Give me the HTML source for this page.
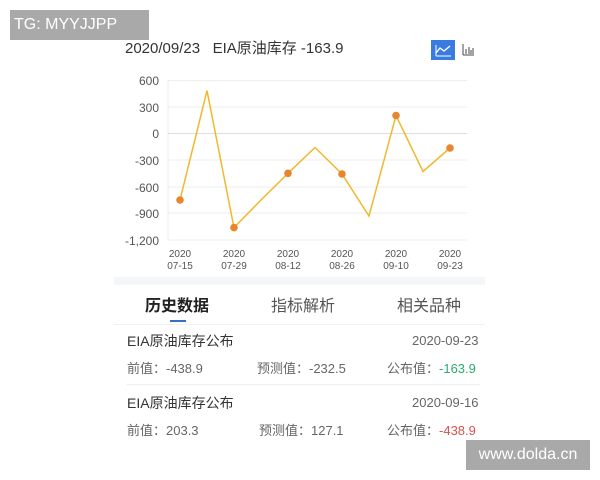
<!DOCTYPE html>
<html><head><meta charset="utf-8"><style>
body{margin:0;width:600px;height:480px;background:#fff;position:relative;overflow:hidden;font-family:"Liberation Sans","Noto Sans CJK SC",sans-serif;}
.a{position:absolute;white-space:nowrap}
</style></head><body>
<div class="a" style="left:10px;top:10px;width:139px;height:30px;background:#a9a9a9;color:#fff;font-size:16px;line-height:30px;padding-left:4px;box-sizing:border-box">TG: MYYJJPP</div>
<div class="a" style="left:125px;top:39px;font-size:15px;color:#333;line-height:20px">2020/09/23&nbsp;&nbsp;&nbsp;EIA原油库存 -163.9</div>
<div class="a" style="left:431px;top:40px;width:24px;height:20px;background:#3a7be0"></div>
<svg class="a" style="left:0;top:0" width="600" height="300">
<polyline points="436,53 440,48 444,51 450,46" fill="none" stroke="#fff" stroke-width="1.3"/>
<line x1="436" y1="56" x2="451" y2="56" stroke="#fff" stroke-width="1"/>
<line x1="436" y1="45" x2="436" y2="56" stroke="#fff" stroke-width="1"/>
<g stroke="#666" stroke-width="1.2"><line x1="463" y1="44" x2="463" y2="55"/><line x1="463" y1="55" x2="474" y2="55"/><line x1="466" y1="49" x2="466" y2="54"/><line x1="469" y1="47" x2="469" y2="54"/><line x1="471" y1="50" x2="471" y2="54"/><line x1="473" y1="48" x2="473" y2="54"/></g>
<g stroke="#eee" stroke-width="1">
<line x1="168" y1="80.5" x2="467" y2="80.5"/><line x1="168" y1="107" x2="467" y2="107"/><line x1="168" y1="160" x2="467" y2="160"/><line x1="168" y1="187" x2="467" y2="187"/><line x1="168" y1="213" x2="467" y2="213"/><line x1="168" y1="240" x2="467" y2="240"/><line x1="168" y1="80" x2="168" y2="240"/></g>
<line x1="168" y1="133.5" x2="467" y2="133.5" stroke="#ddd"/>
<g font-size="12" fill="#555" text-anchor="end"><text x="159" y="85">600</text><text x="159" y="112">300</text><text x="159" y="138">0</text><text x="159" y="165">-300</text><text x="159" y="192">-600</text><text x="159" y="218">-900</text><text x="159" y="245">-1,200</text></g>
<g font-size="10" fill="#555" text-anchor="middle">
<text x="180" y="257">2020</text><text x="180" y="269">07-15</text>
<text x="234" y="257">2020</text><text x="234" y="269">07-29</text>
<text x="288" y="257">2020</text><text x="288" y="269">08-12</text>
<text x="342" y="257">2020</text><text x="342" y="269">08-26</text>
<text x="396" y="257">2020</text><text x="396" y="269">09-10</text>
<text x="450" y="257">2020</text><text x="450" y="269">09-23</text></g>
<polyline points="180,200 207,90.7 234,227.6 261,200 288,173.3 315,147.5 342,174 369,216 396,115.5 423,171.5 450,148" fill="none" stroke="#f0b92c" stroke-width="1.5"/>
<g fill="#e8862e"><circle cx="180" cy="200" r="3.8"/><circle cx="234" cy="227.6" r="3.8"/><circle cx="288" cy="173.3" r="3.8"/><circle cx="342" cy="174" r="3.8"/><circle cx="396" cy="115.5" r="3.8"/><circle cx="450" cy="148" r="3.8"/></g>
<rect x="114" y="277" width="371" height="8" fill="#f5f6f8"/>
</svg>
<div class="a" style="left:145px;top:292px;font-size:16px;font-weight:bold;color:#222">历史数据</div>
<div class="a" style="left:170px;top:320px;width:16px;height:2px;background:#3a6fc8"></div>
<div class="a" style="left:271px;top:292px;font-size:16px;color:#555">指标解析</div>
<div class="a" style="left:397px;top:292px;font-size:16px;color:#555">相关品种</div>
<div class="a" style="left:114px;top:324px;width:371px;height:1px;background:#f0f0f0"></div>
<div class="a" style="left:127px;top:331px;font-size:14px;color:#333">EIA原油库存公布</div>
<div class="a" style="left:412px;top:333px;font-size:13px;color:#666">2020-09-23</div>
<div class="a" style="left:127px;top:358px;font-size:13px;color:#666">前值：-438.9</div>
<div class="a" style="left:257px;top:358px;font-size:13px;color:#666">预测值：-232.5</div>
<div class="a" style="left:387px;top:358px;font-size:13px;color:#666">公布值：<span style="color:#2bab6f">-163.9</span></div>
<div class="a" style="left:127px;top:384px;width:353px;height:1px;background:#eee"></div>
<div class="a" style="left:127px;top:393px;font-size:14px;color:#333">EIA原油库存公布</div>
<div class="a" style="left:412px;top:395px;font-size:13px;color:#666">2020-09-16</div>
<div class="a" style="left:127px;top:420px;font-size:13px;color:#666">前值：203.3</div>
<div class="a" style="left:259px;top:420px;font-size:13px;color:#666">预测值：127.1</div>
<div class="a" style="left:387px;top:420px;font-size:13px;color:#666">公布值：<span style="color:#d9534f">-438.9</span></div>
<div class="a" style="left:466px;top:440px;width:124px;height:30px;background:#a9a9a9;color:#fff;font-size:16px;line-height:30px;text-align:center">www.dolda.cn</div>
</body></html>
